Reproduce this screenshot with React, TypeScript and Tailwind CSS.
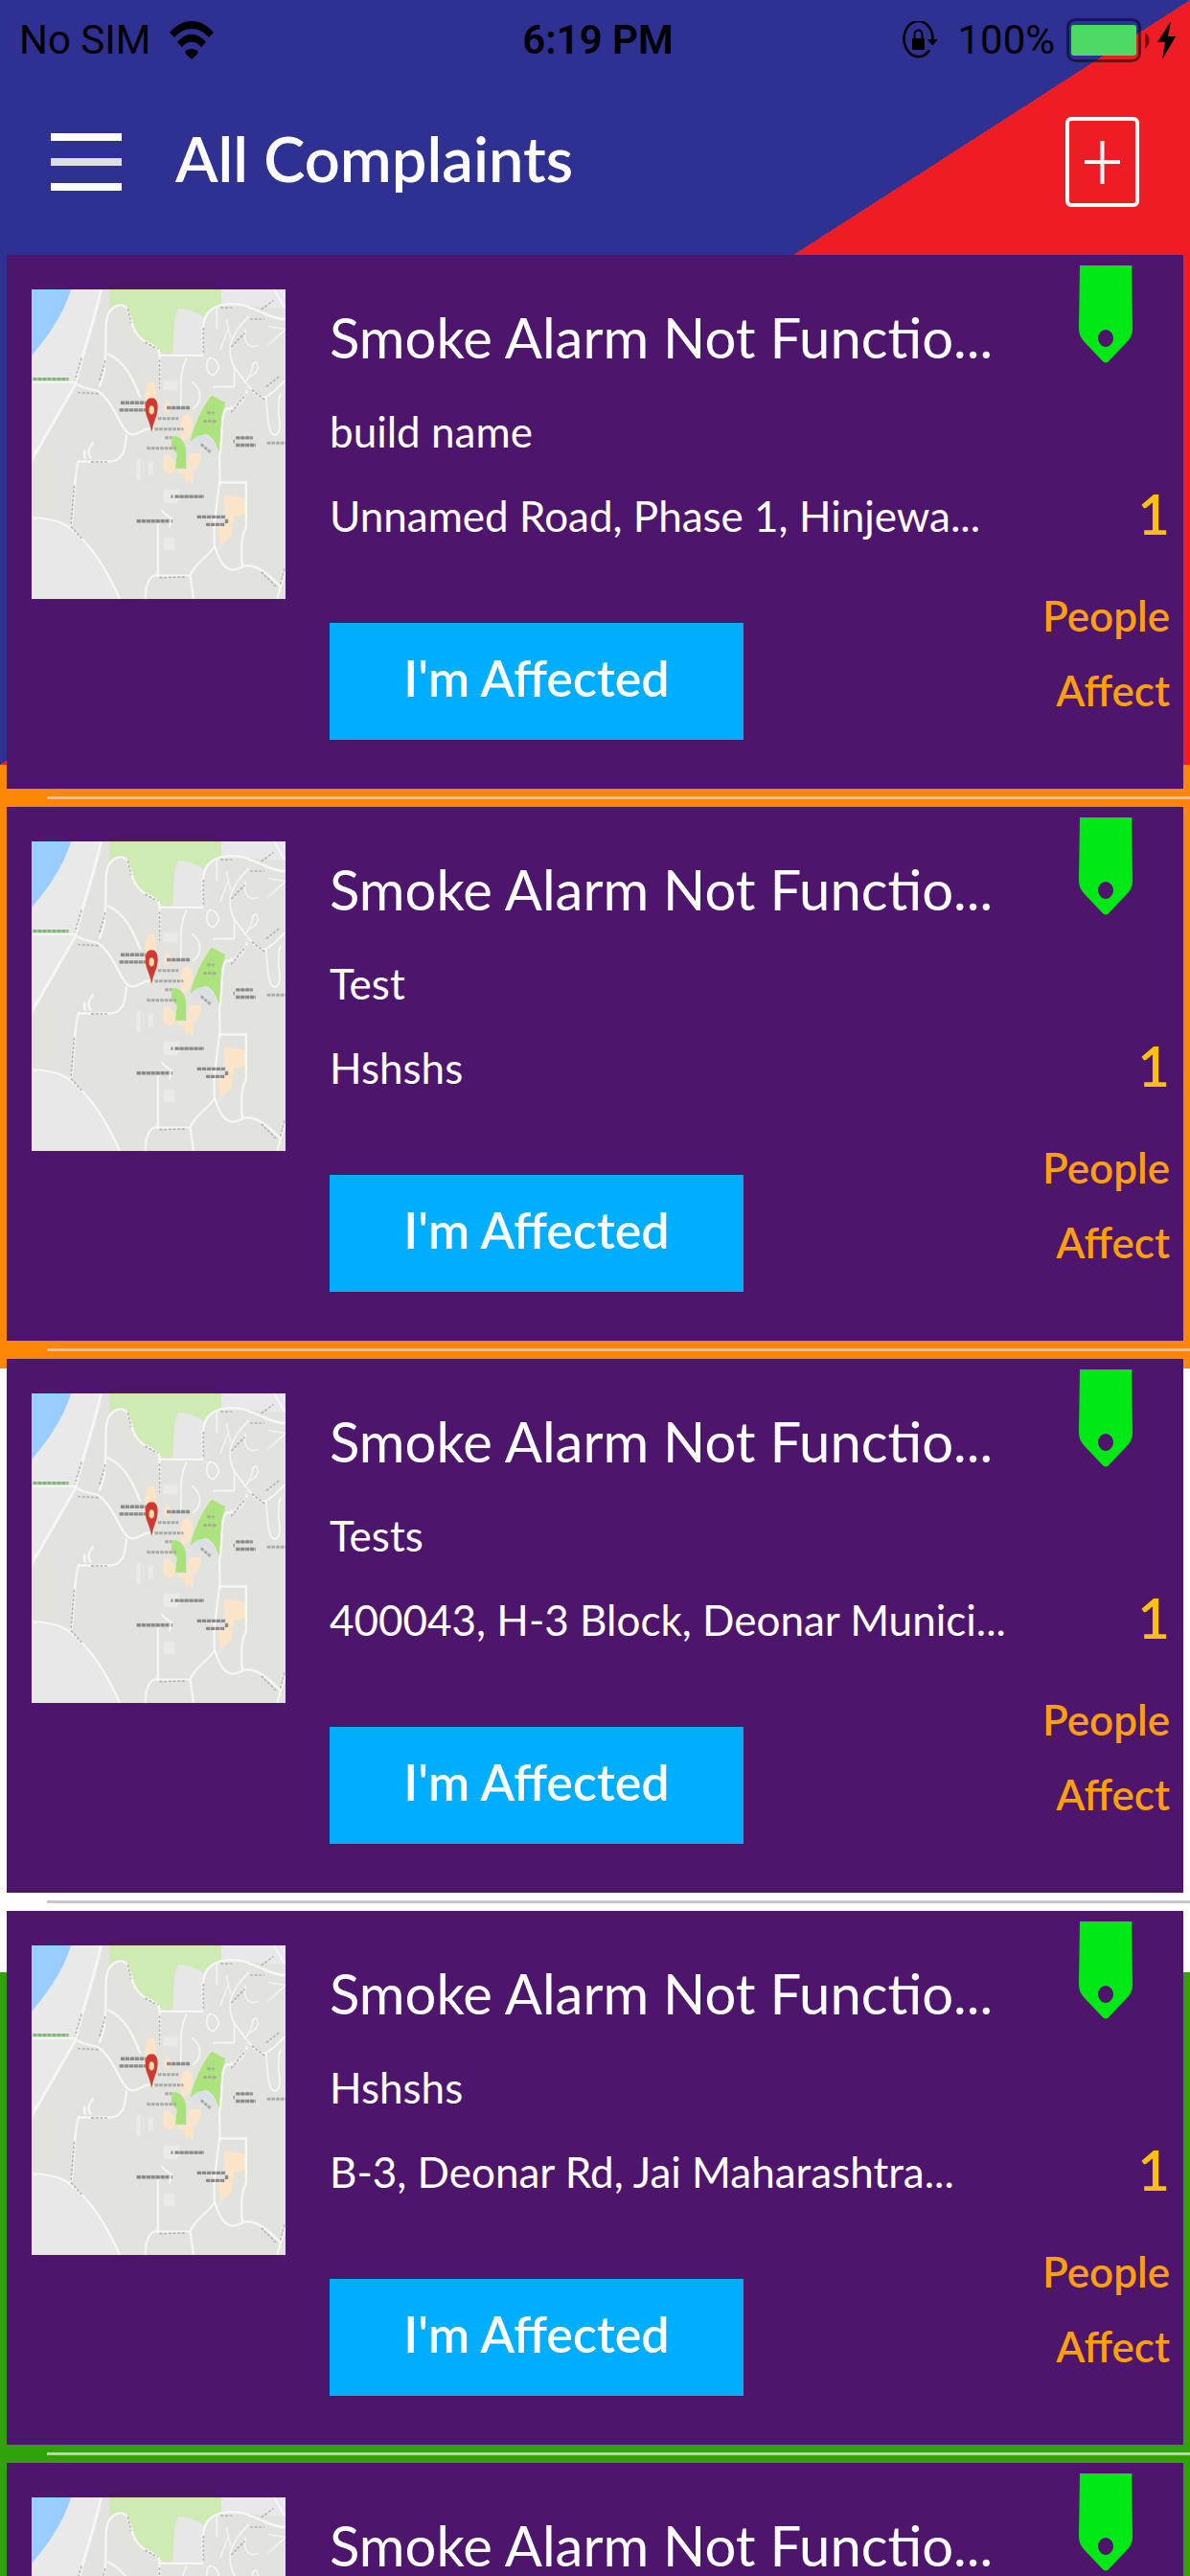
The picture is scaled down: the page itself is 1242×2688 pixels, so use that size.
const complaints = [
  { id: 1, title: "Smoke Alarm Not Functio...", building: "build name", address: "Unnamed Road, Phase 1, Hinjewa...", affected: 1 },
  { id: 2, title: "Smoke Alarm Not Functio...", building: "Test", address: "Hshshs", affected: 1 },
  { id: 3, title: "Smoke Alarm Not Functio...", building: "Tests", address: "400043, H-3 Block, Deonar Munici...", affected: 1 },
  { id: 4, title: "Smoke Alarm Not Functio...", building: "Hshshs", address: "B-3, Deonar Rd, Jai Maharashtra...", affected: 1 },
  { id: 5, title: "Smoke Alarm Not Functio...", building: "", address: "", affected: 1 },
];

function Backdrop() {
  return (
    <div className="absolute inset-0 flex flex-col" aria-hidden="true">
      <div className="flex-[133] bg-[linear-gradient(to_bottom_right,#2e3192_50%,#ee1c25_50%)]" />
      <div className="flex-[105] bg-[#fd8705]" />
      <div className="flex-[105] bg-white" />
      <div className="flex-[105] bg-[#31a30a]" />
    </div>
  );
}

function WifiIcon() {
  return (
    <svg className="w-[46px] h-10" viewBox="0 0 46 40" aria-hidden="true">
      <path d="M0 12C13-4 33-4 46 12L41 17C30 5 16 5 5 17Z" />
      <path d="M8 22C17 11 29 11 38 22L33 27C27 20 19 20 13 27Z" />
      <path d="M16 32C20 28 26 28 30 32C29 35 26 37 23 40C20 37 17 35 16 32Z" />
    </svg>
  );
}

function RotationLockIcon() {
  return (
    <svg className="w-[37px] h-10" viewBox="0 0 37 40" aria-hidden="true">
      <path d="M28 30.500A15 18.500 0 1 1 31.500 19" fill="none" stroke="#000" strokeWidth="2.600" />
      <path d="M25.500 19H37L31.300 25.500Z" />
      <rect x="10" y="18" width="13" height="12" rx="1" />
      <path d="M12.500 18V14C12.500 8 20.500 8 20.500 14V18" fill="none" stroke="#000" strokeWidth="2" />
    </svg>
  );
}

function BatteryIcon() {
  return (
    <svg className="w-[87px] h-[46px]" viewBox="0 0 87 46" aria-hidden="true">
      <rect x="1.500" y="1.500" width="75" height="43" rx="8" fill="none" stroke="#000" strokeOpacity="0.5" strokeWidth="3" />
      <rect x="5" y="7" width="68" height="32" rx="3" fill="#4cd964" />
      <path d="M82 15C88 18 88 28 82 32Z" fillOpacity="0.5" />
    </svg>
  );
}

function StatusBar() {
  return (
    <div className="h-20 pt-1 pl-5 pr-[14px] grid grid-cols-[1fr_auto_1fr] items-center font-[Roboto,sans-serif] text-[42px] leading-none text-black">
      <div className="flex items-center gap-5">
        <span>No SIM</span>
        <WifiIcon />
      </div>
      <span className="font-semibold">6:19 PM</span>
      <div className="flex items-center justify-end">
        <RotationLockIcon />
        <span className="ml-5 mr-3">100%</span>
        <BatteryIcon />
        <svg className="ml-2 w-5 h-10" viewBox="0 0 20 40" aria-hidden="true">
          <path d="M14 0L0 22H8L5 40L19 16H11Z" />
        </svg>
      </div>
    </div>
  );
}

function MapThumbnail() {
  return (
    <svg
      className="w-[265px] h-[323px] shrink-0"
      viewBox="98 125 798 970"
      preserveAspectRatio="none"
      role="img"
      aria-label="Map of the complaint location"
    >
      <path d="M98 125H896V1095H98Z" fill="#e2e3de" />
      <path d="M98 125H318L232 425L98 660Z" fill="#e9e9ea" />
      <path d="M98 838C160 842 200 850 222 868C290 930 330 1010 375 1095H98Z" fill="#e8e8e9" />
      <path d="M98 125H222C195 210 150 270 98 332Z" fill="#99ccff" />
      <path d="M343 125H694V178C660 180 648 200 638 212C610 190 580 185 562 185C545 205 545 240 543 325H510C480 300 440 290 420 255C408 220 408 190 390 175C370 168 355 180 343 187Z" fill="#cfebb4" />
      <path d="M694 125H896V185L830 178L694 178Z" fill="#e8e8ea" />
      <path d="M562 185C580 185 610 195 640 212L634 330H543C545 240 545 205 562 185Z" fill="#e7e7e8" />
      <path d="M664 457L706 480C698 540 690 590 688 640C675 590 650 565 628 585L596 602C605 560 630 500 664 457Z" fill="#ace37d" />
      <path d="M538 585C560 580 580 600 583 625V686H550L555 640L538 620Z" fill="#a9e27a" />
      <path d="M596 602C630 570 660 570 682 640L660 630L640 600L610 620Z" fill="#dcdfe3" />
      <g fill="#fbe5c8">
        <path d="M462 420C480 400 492 430 488 465L452 470Z" />
        <path d="M515 475C530 465 540 490 530 512H513Z" />
        <path d="M570 525C590 505 606 530 605 555C600 580 590 595 575 602L562 570Z" />
        <path d="M512 650C530 630 548 650 550 690L530 705L512 690Z" />
        <path d="M590 640L632 638C630 665 620 690 605 690L606 730H582L578 708L548 690H585Z" />
        <path d="M700 768L770 780V830L735 835L725 900L690 925L684 860H712Z" />
      </g>
      <g fill="#eaeae8">
        <rect x="427" y="655" width="14" height="68" rx="6" />
        <rect x="464" y="665" width="16" height="45" rx="6" />
        <rect x="512" y="752" width="50" height="42" rx="6" />
        <rect x="512" y="902" width="36" height="40" rx="6" />
        <rect x="510" y="412" width="48" height="30" rx="6" />
      </g>
      <g fill="none" stroke="#f6f6f5" strokeWidth="7" strokeLinejoin="round">
        <path d="M316 125C295 230 265 300 234 425L98 660" strokeWidth="9" />
        <path d="M98 416H234C270 450 300 425 325 460C365 500 370 545 400 575C425 590 440 565 470 560" />
        <path d="M310 430C335 390 330 300 332 240C332 170 390 160 400 190C415 240 425 275 460 290C500 310 502 320 500 340V440" />
        <path d="M335 325C390 350 415 400 440 465M500 332H636V250C640 180 690 165 750 172C800 180 850 220 896 218" />
        <path d="M680 180V250M585 340C560 390 570 430 567 490M600 415C640 440 630 480 605 500" strokeWidth="5" />
        <path d="M395 580C395 640 375 665 340 664H245C230 720 232 800 222 868M285 655C270 635 280 620 292 605M265 655V628" />
        <path d="M98 840C180 842 210 860 255 905C310 960 345 1030 375 1095" />
        <path d="M495 860V1022C470 1015 455 1050 456 1095M495 1022H596L607 1095M596 1022C620 970 655 965 672 930V860L690 720L688 650C700 600 690 520 708 500C750 500 770 465 775 440" />
        <path d="M690 730H772V870C755 900 755 940 760 990M674 930C700 1020 735 1010 770 990C820 990 850 1030 880 1055L896 1010M870 1095L885 1040" />
        <path d="M896 185C880 165 870 140 860 125M780 210C740 250 700 300 735 370C770 410 800 470 835 462C870 440 880 420 896 412" strokeWidth="5" />
        <path d="M835 462C840 520 840 585 865 582C895 560 860 520 880 450M735 360V430H668M655 340C640 370 655 395 670 393C700 370 680 340 655 340" strokeWidth="5" />
        <path d="M765 420C800 390 785 350 805 352C818 380 795 390 785 400M840 240L896 250L840 300M770 250C760 300 790 310 810 300M710 220L725 280M690 315L715 250" strokeWidth="4" />
        <path d="M505 818L540 845L530 870" strokeWidth="5" />
      </g>
      <g fill="none" stroke="#b4b6b4" strokeWidth="5" strokeDasharray="9 5">
        <path d="M255 340L234 410M330 348L310 415M243 448L310 452M285 665H335M232 740L222 860M222 868L255 905" />
        <path d="M400 185L410 230M455 290L495 312M500 345V440M638 245V330M692 182H730M785 218H830M820 188L858 160M725 305L768 262M790 440L830 470M835 430L880 395M725 510L772 455" />
        <path d="M500 1028L585 1026M820 1010L870 1060M893 1000L880 1050" />
      </g>
      <path
        d="M650 512H672M638 538H680M630 610L660 635M838 606H896M495 530H560M485 563H575M517 590H538M460 623H552"
        fill="none"
        stroke="#a9aba9"
        strokeWidth="9"
        strokeDasharray="11 3"
      />
      <g fill="none" stroke="#8b8c8a" strokeWidth="10" strokeDasharray="13 2">
        <path d="M378 480H456M374 503H456M523 496H595M740 590H793M740 613H802M548 774H640M428 851H530M618 838H706M646 862H706" />
        <path d="M536 774H542M537 851H541M711 845V858M732 601H736" />
      </g>
      <path d="M102 406H214" stroke="#7fb873" strokeWidth="10" strokeDasharray="13 2" />
      <path d="M475 465C500 465 497 505 488 528C481 545 478 557 475 572C472 557 469 545 462 528C453 505 450 465 475 465Z" fill="#d03b31" />
      <ellipse cx="475" cy="503" rx="8" ry="14" fill="#fbd9b5" />
    </svg>
  );
}

function TagIcon() {
  return (
    <svg className="w-14 h-[102px] mr-[39px]" viewBox="0 0 56 102" aria-hidden="true">
      <path
        d="M1 0H55L56 66Q56 74 50 80L32 99Q28 104 24 99L6 80Q0 74 0 66ZM28 67A8 9 0 1 0 28 85A8 9 0 1 0 28 67Z"
        fill="#00e916"
        fillRule="evenodd"
      />
    </svg>
  );
}

function ComplaintCard({ complaint }: { complaint: (typeof complaints)[number] }) {
  return (
    <article className="mx-[7px] h-[557px] pl-[26px] pr-[14px] flex bg-[#4e156d] text-white">
      <div className="pt-9 mr-[46px]">
        <MapThumbnail />
      </div>
      <div className="flex-1 min-w-0 pt-9">
        <h2 className="h-[104px] text-[58px] leading-[100px] truncate">{complaint.title}</h2>
        <p className="h-[88px] text-[44px] leading-[88px] truncate">{complaint.building}</p>
        <p className="h-[88px] text-[44px] leading-[88px] truncate">{complaint.address}</p>
        <button type="button" className="mt-[68px] w-[432px] h-[122px] pb-2 bg-[#00aeff] text-[52px] font-semibold">
          I'm Affected
        </button>
      </div>
      <div className="w-40 pt-[11px] flex flex-col items-end text-right text-[44px] leading-[78px] font-semibold text-[#fd9f08]">
        <TagIcon />
        <span className="mt-[118px] text-[58px] text-[#ffc107]">{complaint.affected}</span>
        <span className="mt-7">People<br />Affect</span>
      </div>
    </article>
  );
}

export default function App() {
  return (
    <div className="relative h-screen overflow-hidden font-[Lato,sans-serif]">
      <Backdrop />
      <div className="relative h-full flex flex-col">
        <header className="h-[266px] shrink-0">
          <StatusBar />
          <div className="h-[186px] pb-2 px-[53px] flex items-center text-white">
            <button type="button" aria-label="Open menu" className="w-[74px] h-[60px] flex flex-col justify-between">
              <span className="w-full h-2 bg-white" />
              <span className="w-full h-2 bg-[#dcdcee]" />
              <span className="w-full h-2 bg-white" />
            </button>
            <h1 className="ml-14 pb-2 flex-1 text-[65px] leading-none font-semibold">All Complaints</h1>
            <button type="button" aria-label="Add complaint">
              <svg className="w-[77px] h-[94px]" viewBox="0 0 77 94" fill="none" stroke="#fff" aria-hidden="true">
                <rect x="2" y="2" width="73" height="90" rx="4" strokeWidth="4" />
                <path d="M20 47H57" strokeWidth="4" />
                <path d="M38.500 25V70" strokeWidth="4" />
              </svg>
            </button>
          </div>
        </header>
        <main className="flex-1 min-h-0 overflow-y-auto [scrollbar-width:none]">
          <ul>
            {complaints.map((complaint) => (
              <li key={complaint.id}>
                <ComplaintCard complaint={complaint} />
                <div className="h-[19px] pl-[49px] pt-2">
                  <div className="h-[3px] bg-[#c8c7cc]" />
                </div>
              </li>
            ))}
          </ul>
        </main>
      </div>
    </div>
  );
}
